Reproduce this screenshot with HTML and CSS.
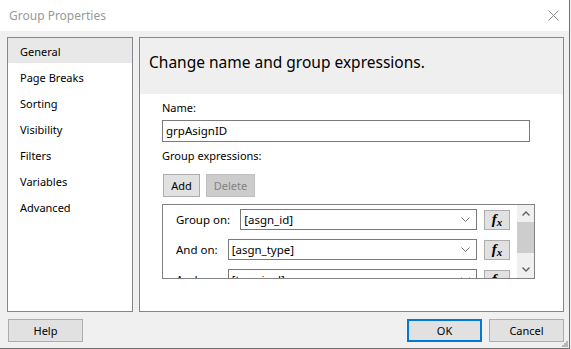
FILE: index.html
```html
<!DOCTYPE html>
<html lang="en">
<head>
    <meta charset="UTF-8">
    <title>Group Properties</title>
    <link rel="stylesheet" href="styles.css">
</head>
<body>
    <div class="dialog">
        <div class="titlebar">
            <span class="title">Group Properties</span>
            <svg class="close" width="11" height="11" viewBox="0 0 11 11">
                <path d="M0.5 0.5 L10.5 10.5 M10.5 0.5 L0.5 10.5" stroke="#8a8a8a" stroke-width="1" fill="none"/>
            </svg>
        </div>

        <div class="main">
            <ul class="nav">
                <li class="active">General</li>
                <li>Page Breaks</li>
                <li>Sorting</li>
                <li>Visibility</li>
                <li>Filters</li>
                <li>Variables</li>
                <li>Advanced</li>
            </ul>

            <div class="page">
                <div class="page-head">Change name and group expressions.</div>
                <div class="page-body">
                    <div class="field-label">Name:</div>
                    <div class="textbox">grpAsignID</div>
                    <div class="field-label expr-title">Group expressions:</div>
                    <div class="toolbar">
                        <button class="btn add">Add</button>
                        <button class="btn delete disabled">Delete</button>
                    </div>

                    <div class="expr-list">
                        <div class="expr-rows">
                            <div class="expr-row">
                                <span class="expr-label">Group on:</span>
                                <div class="combo">
                                    <span>[asgn_id]</span>
                                    <svg width="9" height="5" viewBox="0 0 9 5"><path d="M0.5 0.5 L4.5 4.5 L8.5 0.5" stroke="#707070" fill="none"/></svg>
                                </div>
                                <button class="fx"><span class="fx-f">f</span><span class="fx-x">x</span></button>
                            </div>
                            <div class="expr-row">
                                <span class="expr-label">And on:</span>
                                <div class="combo">
                                    <span>[asgn_type]</span>
                                    <svg width="9" height="5" viewBox="0 0 9 5"><path d="M0.5 0.5 L4.5 4.5 L8.5 0.5" stroke="#707070" fill="none"/></svg>
                                </div>
                                <button class="fx"><span class="fx-f">f</span><span class="fx-x">x</span></button>
                            </div>
                            <div class="expr-row">
                                <span class="expr-label">And on:</span>
                                <div class="combo">
                                    <span>[terminal]</span>
                                    <svg width="9" height="5" viewBox="0 0 9 5"><path d="M0.5 0.5 L4.5 4.5 L8.5 0.5" stroke="#707070" fill="none"/></svg>
                                </div>
                                <button class="fx"><span class="fx-f">f</span><span class="fx-x">x</span></button>
                            </div>
                        </div>
                        <div class="scrollbar">
                            <div class="arrow">
                                <svg width="8" height="5" viewBox="0 0 8 5"><path d="M0.5 4.5 L4 1 L7.5 4.5" stroke="#606060" stroke-width="1.4" fill="none"/></svg>
                            </div>
                            <div class="thumb"></div>
                            <div class="track"></div>
                            <div class="arrow">
                                <svg width="8" height="5" viewBox="0 0 8 5"><path d="M0.5 0.5 L4 4 L7.5 0.5" stroke="#606060" stroke-width="1.4" fill="none"/></svg>
                            </div>
                        </div>
                    </div>
                </div>
            </div>
        </div>

        <div class="footer">
            <button class="btn">Help</button>
            <div class="footer-right">
                <button class="btn default">OK</button>
                <button class="btn">Cancel</button>
            </div>
        </div>

        <svg class="grip" width="7" height="7" viewBox="0 0 7 7">
            <rect x="5" y="1" width="2" height="2" fill="#b8b8b8"/>
            <rect x="3" y="3" width="2" height="2" fill="#b8b8b8"/>
            <rect x="5" y="3" width="2" height="2" fill="#b8b8b8"/>
            <rect x="1" y="5" width="2" height="2" fill="#b8b8b8"/>
            <rect x="3" y="5" width="2" height="2" fill="#b8b8b8"/>
            <rect x="5" y="5" width="2" height="2" fill="#b8b8b8"/>
        </svg>
    </div>
</body>
</html>
```

FILE: styles.css
```css
body {
    margin: 0;
    background-color: #f0f0f0;
    font-family: 'Noto Sans', sans-serif;
    font-size: 11px;
    color: #000;
}
.dialog {
    position: relative;
    width: 569px;
    height: 348px;
    background-color: #f0f0f0;
    border-right: 1px solid #6f6f6f;
    border-bottom: 1px solid #6f6f6f;
    display: flex;
    flex-direction: column;
}
.titlebar {
    height: 31px;
    background-color: #fff;
    display: flex;
    align-items: center;
    justify-content: space-between;
    padding: 0 9px 0 9px;
}
.title {
    font-size: 12px;
    color: #999;
}
.close {
    margin-right: 1px;
}
.main {
    display: flex;
    padding: 6px 5px 0 7px;
    gap: 6px;
    height: 275px;
}
.nav {
    list-style: none;
    margin: 0;
    padding: 0;
    width: 124px;
    background-color: #fff;
    border: 1px solid #828790;
}
.nav li {
    height: 24px;
    line-height: 24px;
    padding: 2px 0 0 12px;
}
.nav li.active {
    background: linear-gradient(#e8e8e8 25px, transparent 25px);
}
.page {
    flex: 1;
    background-color: #fff;
    border: 1px solid #828790;
    display: flex;
    flex-direction: column;
}
.page-head {
    height: 56px;
    background-color: #efefef;
    font-size: 15.5px;
    line-height: 49px;
    padding-left: 9px;
}
.page-body {
    padding: 6px 0 0 22px;
}
.field-label {
    height: 16px;
    line-height: 16px;
}
.textbox {
    margin-top: 4px;
    width: 363px;
    height: 20px;
    border: 1px solid #7a7a7a;
    line-height: 20px;
    padding-left: 3px;
    font-size: 11.5px;
}
.expr-title {
    margin-top: 6px;
}
.toolbar {
    display: flex;
    gap: 6px;
    margin-top: 10px;
    padding-left: 1px;
}
.btn {
    font-family: inherit;
    font-size: 11px;
    width: 75px;
    height: 23px;
    padding: 0;
    background-color: #e1e1e1;
    border: 1px solid #adadad;
    color: #000;
}
.btn.add {
    width: 37px;
}
.btn.delete {
    width: 49px;
}
.btn.disabled {
    background-color: #cccccc;
    border-color: #bfbfbf;
    color: #838383;
}
.btn.default {
    border: 2px solid #0078d7;
}
.expr-list {
    margin-top: 7px;
    width: 371px;
    height: 73px;
    border: 1px solid #828282;
    display: flex;
}
.expr-rows {
    flex: 1;
    overflow: hidden;
    padding: 4px 7px 0 13px;
}
.expr-row {
    display: flex;
    align-items: center;
    height: 21px;
    margin-bottom: 9px;
}
.expr-label {
    margin-right: 10px;
    font-size: 11.5px;
}
.combo {
    flex: 1;
    height: 19px;
    border: 1px solid #7a7a7a;
    display: flex;
    align-items: center;
    justify-content: space-between;
    padding: 0 6px 0 3px;
    font-size: 11.5px;
}
.fx {
    margin-left: 7px;
    width: 26px;
    height: 20px;
    padding: 0;
    background-color: #e1e1e1;
    border: 1px solid #adadad;
    font-family: 'Liberation Serif', serif;
    font-weight: bold;
    font-style: italic;
    color: #000;
    display: flex;
    align-items: center;
    justify-content: center;
}
.fx-f {
    font-size: 15px;
}
.fx-x {
    font-size: 11px;
    margin-top: 4px;
}
.scrollbar {
    width: 17px;
    background-color: #f0f0f0;
    display: flex;
    flex-direction: column;
}
.arrow {
    height: 17px;
    display: flex;
    align-items: center;
    justify-content: center;
}
.thumb {
    height: 31px;
    background-color: #cdcdcd;
}
.track {
    flex: 1;
}
.footer {
    display: flex;
    justify-content: space-between;
    padding: 7px 5px 0 8px;
}
.footer-right {
    display: flex;
    gap: 7px;
}
.grip {
    position: absolute;
    right: 1px;
    bottom: 1px;
}
```
